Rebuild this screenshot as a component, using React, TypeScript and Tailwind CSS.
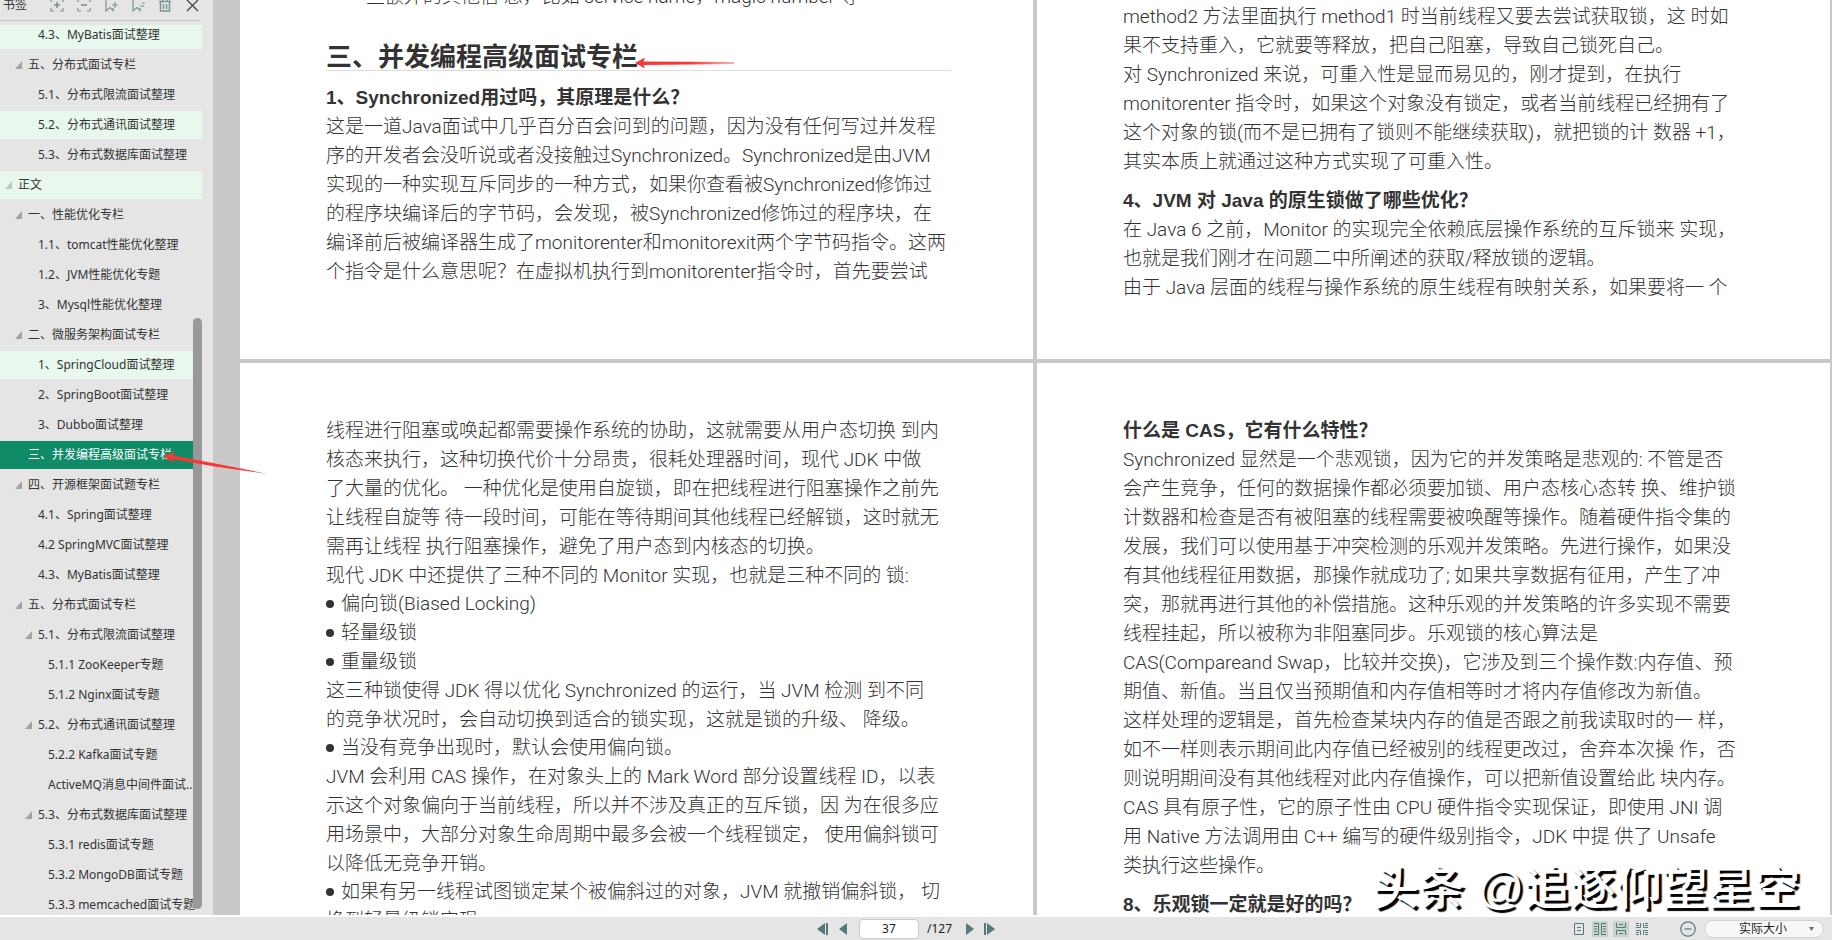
import type { ReactNode } from "react";

type Bookmark = {
  label: string;
  level: number;
  open?: boolean;
  marked?: boolean;
  active?: boolean;
};

const bookmarks: Bookmark[] = [
  { label: "4.3、MyBatis面试整理", level: 2, marked: true },
  { label: "五、分布式面试专栏", level: 1, open: true },
  { label: "5.1、分布式限流面试整理", level: 2 },
  { label: "5.2、分布式通讯面试整理", level: 2, marked: true },
  { label: "5.3、分布式数据库面试整理", level: 2 },
  { label: "正文", level: 0, open: true, marked: true },
  { label: "一、性能优化专栏", level: 1, open: true },
  { label: "1.1、tomcat性能优化整理", level: 2 },
  { label: "1.2、JVM性能优化专题", level: 2 },
  { label: "3、Mysql性能优化整理", level: 2 },
  { label: "二、微服务架构面试专栏", level: 1, open: true },
  { label: "1、SpringCloud面试整理", level: 2, marked: true },
  { label: "2、SpringBoot面试整理", level: 2 },
  { label: "3、Dubbo面试整理", level: 2 },
  { label: "三、并发编程高级面试专栏", level: 1, active: true },
  { label: "四、开源框架面试题专栏", level: 1, open: true },
  { label: "4.1、Spring面试整理", level: 2 },
  { label: "4.2 SpringMVC面试整理", level: 2 },
  { label: "4.3、MyBatis面试整理", level: 2 },
  { label: "五、分布式面试专栏", level: 1, open: true },
  { label: "5.1、分布式限流面试整理", level: 2, open: true },
  { label: "5.1.1 ZooKeeper专题", level: 3 },
  { label: "5.1.2 Nginx面试专题", level: 3 },
  { label: "5.2、分布式通讯面试整理", level: 2, open: true },
  { label: "5.2.2 Kafka面试专题", level: 3 },
  { label: "ActiveMQ消息中间件面试..", level: 3 },
  { label: "5.3、分布式数据库面试整理", level: 2, open: true },
  { label: "5.3.1 redis面试专题", level: 3 },
  { label: "5.3.2 MongoDB面试专题", level: 3 },
  { label: "5.3.3 memcached面试专题", level: 3 },
];

const indents = ["pl-[5px]", "pl-[15px]", "pl-[25px]", "pl-[35px]"];

function Lines({ rows }: { rows: string[] }) {
  return (
    <p>
      {rows.map((row) => (
        <span key={row} className="block">
          {row}
        </span>
      ))}
    </p>
  );
}

function Bullets({ items }: { items: string[] }) {
  return (
    <ul className="-mt-px">
      {items.map((item) => (
        <li key={item} className="flex items-center gap-[7px]">
          <span className="h-2 w-2 shrink-0 rounded-full bg-[#333]" />
          {item}
        </li>
      ))}
    </ul>
  );
}

function Question({ children }: { children: ReactNode }) {
  return (
    <h3 className="font-['Liberation_Sans','Noto_Sans_CJK_SC',sans-serif] font-bold">{children}</h3>
  );
}

function Sheet({ className, children }: { className: string; children: ReactNode }) {
  return (
    <section
      className={`flex min-w-0 flex-col overflow-hidden whitespace-nowrap bg-white pl-[86px] pr-[82px] ${className}`}
    >
      {children}
    </section>
  );
}

function ToolButton({ label, children }: { label: string; children: ReactNode }) {
  return (
    <button type="button" aria-label={label} className="flex h-4 w-4 items-center justify-center">
      <svg width="14" height="14" viewBox="0 0 14 14" fill="none" stroke="#7b9496" strokeWidth="1.2">
        {children}
      </svg>
    </button>
  );
}

function Sidebar() {
  return (
    <aside className="flex w-[213px] shrink-0 flex-col bg-[#e5e5e5] font-['Noto_Sans','Noto_Sans_CJK_SC',sans-serif] text-xs text-[#333]">
      <div className="flex h-[25px] shrink-0 flex-col pr-[13px]">
        <div className="flex h-[21px] items-start border-b border-[#c4c4c4] pl-[3px]">
          <span className="-mt-[3px] mr-[22px] shrink-0 leading-4">书签</span>
          <div className="-mt-[3px] flex shrink-0 gap-[11px]">
            <ToolButton label="展开">
              <path d="M1 4V1h3M10 1h3v3M13 10v3h-3M4 13H1v-3" />
              <path d="M7 4v6M4 7h6" strokeWidth="1.6" />
            </ToolButton>
            <ToolButton label="折叠">
              <path d="M1 4V1h3M10 1h3v3M13 10v3h-3M4 13H1v-3" />
              <path d="M4 7h6" strokeWidth="1.6" />
            </ToolButton>
            <ToolButton label="添加书签">
              <path d="M8 1H2v12l4-3.5 3 3V10M11 4v6M8 7h6" />
            </ToolButton>
            <ToolButton label="移除书签">
              <path d="M8 1H2v12l4-3.5 3 3V10M11 5h3M9 8h4" />
            </ToolButton>
            <ToolButton label="删除">
              <path d="M1 3.5h12M4.5 3V1h5v2M2.5 4v9h9V4M5.5 6v5M8.5 6v5" strokeWidth="1.5" />
            </ToolButton>
            <button type="button" aria-label="关闭" className="flex h-4 w-4 items-center justify-center">
              <svg width="13" height="13" viewBox="0 0 13 13" fill="none" stroke="#444" strokeWidth="1.3">
                <path d="M1 1l11 11M12 1L1 12" />
              </svg>
            </button>
          </div>
        </div>
      </div>

      <nav className="relative min-h-0 flex-1 overflow-hidden">
        <ul className="-mt-[5px] mr-[11px]">
          {bookmarks.map((item, i) => (
            <li key={i} className="py-px">
              <a
                href="#"
                className={`flex h-7 items-center overflow-hidden whitespace-nowrap ${indents[item.level]} ${
                  item.active ? "bg-[#0f8b68] text-white" : item.marked ? "bg-[#e8f8ec]" : ""
                }`}
              >
                <span className="flex w-[13px] shrink-0">
                  {item.open && (
                    <svg width="7" height="8" viewBox="0 0 7 8" fill={item.level === 0 ? "#c4c4c4" : "#a3a3a3"}>
                      <path d="M7 0v8H0z" />
                    </svg>
                  )}
                </span>
                {item.label}
              </a>
            </li>
          ))}
        </ul>
        <div className="absolute bottom-[6px] right-[11px] top-[293px] w-[9px] rounded-full bg-[#999]" />
      </nav>
    </aside>
  );
}

function StatusBar() {
  return (
    <footer className="grid h-[25px] shrink-0 grid-cols-[1fr_auto_1fr] items-center overflow-hidden border-t-2 border-white bg-[#e5e5e5] pr-5 font-['Noto_Sans','Noto_Sans_CJK_SC',sans-serif] text-xs text-[#222]">
      <div />
      <div className="flex items-center">
        <button type="button" aria-label="第一页" className="mr-[10px]">
          <svg width="12" height="12" viewBox="0 0 12 12" fill="#56787b">
            <path d="M8 0v12L0 6zM9 0h2v12H9z" />
          </svg>
        </button>
        <button type="button" aria-label="上一页" className="mr-3">
          <svg width="8" height="12" viewBox="0 0 8 12" fill="#56787b">
            <path d="M8 0v12L0 6z" />
          </svg>
        </button>
        <input
          aria-label="页码"
          defaultValue="37"
          className="mr-2 h-5 w-[60px] rounded-sm border border-[#ccc] bg-white text-center"
        />
        <span className="mr-[14px]">/127</span>
        <button type="button" aria-label="下一页" className="mr-[9px]">
          <svg width="8" height="12" viewBox="0 0 8 12" fill="#56787b">
            <path d="M0 0v12l8-6z" />
          </svg>
        </button>
        <button type="button" aria-label="最后一页">
          <svg width="12" height="12" viewBox="0 0 12 12" fill="#56787b">
            <path d="M4 0v12l8-6zM1 0h2v12H1z" />
          </svg>
        </button>
      </div>

      <div className="-mr-9 flex items-center justify-end">
        <div className="mr-[30px] flex gap-[5px]">
          <button type="button" aria-label="单页" className="flex h-4 w-4 items-center justify-center">
            <svg width="12" height="14" viewBox="0 0 12 14" fill="none" stroke="#56787b">
              <path d="M1.5 1.5h9v11h-9zM4 5.5h4M4 8.5h4" />
            </svg>
          </button>
          <button type="button" aria-label="双页" className="flex h-4 w-4 items-center justify-center bg-[#c5d5cb]">
            <svg width="14" height="14" viewBox="0 0 14 14" fill="none" stroke="#56787b">
              <path d="M1 1.5h4.5v11H1M13 1.5H8.5v11H13M1 4.5h3M1 7h3M1 9.5h3M10 4.5h3M10 7h3M10 9.5h3" />
            </svg>
          </button>
          <button type="button" aria-label="连续" className="flex h-4 w-4 items-center justify-center bg-[#c5d5cb]">
            <svg width="12" height="14" viewBox="0 0 12 14" fill="none" stroke="#56787b">
              <path d="M1.5 1v4.5h9V1M1.5 13V8.5h9V13M4 2.5h4M4 11.5h4" />
            </svg>
          </button>
          <button type="button" aria-label="连续双页" className="flex h-4 w-4 items-center justify-center">
            <svg width="12" height="14" viewBox="0 0 12 14" fill="none" stroke="#56787b">
              <path d="M4.5 1v4.5H0M7.5 1v4.5H12M4.5 13V8.5H0M7.5 13V8.5H12M0 1.5h3M0 3.5h3M9 1.5h3M9 3.5h3M0 10.5h3M0 12.5h3M9 10.5h3M9 12.5h3" />
            </svg>
          </button>
        </div>
        <button type="button" aria-label="缩小" className="mr-2">
          <svg width="16" height="16" viewBox="0 0 16 16" fill="none" stroke="#56787b" strokeWidth="1.2">
            <circle cx="8" cy="8" r="7.2" />
            <path d="M4.5 8h7" />
          </svg>
        </button>
        <div className="relative mr-2 flex items-center">
          <select
            aria-label="缩放"
            className="h-[18px] w-[120px] appearance-none rounded-full border border-[#d2d2d2] bg-[#f7f7f7] pl-[34px] leading-4"
          >
            <option>实际大小</option>
          </select>
          <svg className="pointer-events-none absolute right-[10px]" width="5" height="4" viewBox="0 0 5 4" fill="#56787b">
            <path d="M0 0h5L2.5 4z" />
          </svg>
        </div>
        <button type="button" aria-label="放大">
          <svg width="16" height="16" viewBox="0 0 16 16" fill="none" stroke="#56787b" strokeWidth="1.2">
            <circle cx="8" cy="8" r="7.2" />
            <path d="M4.5 8h7M8 4.5v7" />
          </svg>
        </button>
      </div>
    </footer>
  );
}

export default function App() {
  return (
    <div className="relative flex h-screen flex-col overflow-hidden bg-[#c9c9c9]">
      <div className="flex min-h-0 flex-1">
        <Sidebar />
        <main className="ml-[27px] grid min-w-0 flex-1 grid-cols-2 grid-rows-[359px_1fr] gap-1 pr-[2px] font-['Roboto','Noto_Sans_CJK_SC',sans-serif] text-[19px] font-light leading-[29px] text-[#333]">
          <Sheet className="justify-end pb-[73px]">
            <p className="pl-10">些额外的其他信 息，比如 service name，magic number 等</p>
            <h2 className="mb-3 mt-[18px] flex h-[42px] items-center border-b border-[#ddd] pt-[14px] text-[26px] font-bold leading-[30px]">
              三、并发编程高级面试专栏
              <svg width="100" height="12" viewBox="0 0 100 12" className="-ml-1 mt-3">
                <defs>
                  <linearGradient id="fade">
                    <stop offset="0.55" stopColor="#f93636" />
                    <stop offset="1" stopColor="#f93636" stopOpacity="0.4" />
                  </linearGradient>
                </defs>
                <path d="M1 6l10-5.5-1.5 4L100 5v2L9.5 8l1.5 3.5z" fill="url(#fade)" />
              </svg>
            </h2>
            <Question>1、Synchronized用过吗，其原理是什么？</Question>
            <Lines
              rows={[
                "这是一道Java面试中几乎百分百会问到的问题，因为没有任何写过并发程",
                "序的开发者会没听说或者没接触过Synchronized。Synchronized是由JVM",
                "实现的一种实现互斥同步的一种方式，如果你查看被Synchronized修饰过",
                "的程序块编译后的字节码，会发现，被Synchronized修饰过的程序块，在",
                "编译前后被编译器生成了monitorenter和monitorexit两个字节码指令。这两",
                "个指令是什么意思呢？在虚拟机执行到monitorenter指令时，首先要尝试",
              ]}
            />
          </Sheet>

          <Sheet className="justify-end gap-[10px] pb-[57px]">
            <Lines
              rows={[
                "method2 方法里面执行 method1 时当前线程又要去尝试获取锁，这 时如",
                "果不支持重入，它就要等释放，把自己阻塞，导致自己锁死自己。",
                "对 Synchronized 来说，可重入性是显而易见的，刚才提到，在执行",
                "monitorenter 指令时，如果这个对象没有锁定，或者当前线程已经拥有了",
                "这个对象的锁(而不是已拥有了锁则不能继续获取)，就把锁的计 数器 +1，",
                "其实本质上就通过这种方式实现了可重入性。",
              ]}
            />
            <div>
              <Question>4、JVM 对 Java 的原生锁做了哪些优化？</Question>
              <Lines
                rows={[
                  "在 Java 6 之前，Monitor 的实现完全依赖底层操作系统的互斥锁来 实现，",
                  "也就是我们刚才在问题二中所阐述的获取/释放锁的逻辑。",
                  "由于 Java 层面的线程与操作系统的原生线程有映射关系，如果要将一 个",
                ]}
              />
            </div>
          </Sheet>

          <Sheet className="pt-[53px]">
            <Lines
              rows={[
                "线程进行阻塞或唤起都需要操作系统的协助，这就需要从用户态切换 到内",
                "核态来执行，这种切换代价十分昂贵，很耗处理器时间，现代 JDK 中做",
                "了大量的优化。 一种优化是使用自旋锁，即在把线程进行阻塞操作之前先",
                "让线程自旋等 待一段时间，可能在等待期间其他线程已经解锁，这时就无",
                "需再让线程 执行阻塞操作，避免了用户态到内核态的切换。",
                "现代 JDK 中还提供了三种不同的 Monitor 实现，也就是三种不同的 锁:",
              ]}
            />
            <Bullets items={["偏向锁(Biased Locking)", "轻量级锁", "重量级锁"]} />
            <Lines
              rows={[
                "这三种锁使得 JDK 得以优化 Synchronized 的运行，当 JVM 检测 到不同",
                "的竞争状况时，会自动切换到适合的锁实现，这就是锁的升级、 降级。",
              ]}
            />
            <Bullets items={["当没有竞争出现时，默认会使用偏向锁。"]} />
            <Lines
              rows={[
                "JVM 会利用 CAS 操作，在对象头上的 Mark Word 部分设置线程 ID，以表",
                "示这个对象偏向于当前线程，所以并不涉及真正的互斥锁，因 为在很多应",
                "用场景中，大部分对象生命周期中最多会被一个线程锁定， 使用偏斜锁可",
                "以降低无竞争开销。",
              ]}
            />
            <Bullets items={["如果有另一线程试图锁定某个被偏斜过的对象，JVM 就撤销偏斜锁， 切"]} />
            <Lines rows={["换到轻量级锁实现。"]} />
          </Sheet>

          <Sheet className="gap-[10px] pt-[53px]">
            <div>
              <Question>什么是 CAS，它有什么特性？</Question>
              <Lines
                rows={[
                  "Synchronized 显然是一个悲观锁，因为它的并发策略是悲观的: 不管是否",
                  "会产生竞争，任何的数据操作都必须要加锁、用户态核心态转 换、维护锁",
                  "计数器和检查是否有被阻塞的线程需要被唤醒等操作。随着硬件指令集的",
                  "发展，我们可以使用基于冲突检测的乐观并发策略。先进行操作，如果没",
                  "有其他线程征用数据，那操作就成功了; 如果共享数据有征用，产生了冲",
                  "突，那就再进行其他的补偿措施。这种乐观的并发策略的许多实现不需要",
                  "线程挂起，所以被称为非阻塞同步。乐观锁的核心算法是",
                  "CAS(Compareand Swap，比较并交换)，它涉及到三个操作数:内存值、预",
                  "期值、新值。当且仅当预期值和内存值相等时才将内存值修改为新值。",
                  "这样处理的逻辑是，首先检查某块内存的值是否跟之前我读取时的一 样，",
                  "如不一样则表示期间此内存值已经被别的线程更改过，舍弃本次操 作，否",
                  "则说明期间没有其他线程对此内存值操作，可以把新值设置给此 块内存。",
                  "CAS 具有原子性，它的原子性由 CPU 硬件指令实现保证，即使用 JNI 调",
                  "用 Native 方法调用由 C++ 编写的硬件级别指令，JDK 中提 供了 Unsafe",
                  "类执行这些操作。",
                ]}
              />
            </div>
            <Question>8、乐观锁一定就是好的吗？</Question>
          </Sheet>
        </main>
      </div>
      <StatusBar />

      {/* Pointer at the current bookmark */}
      <svg className="pointer-events-none absolute left-[162px] top-[450px]" width="108" height="26" viewBox="0 0 108 26">
        <path d="M1 6l12-4-2 3.5L56 14l50 10-50-7L10 9l1.5 4z" fill="#f93636" />
      </svg>

      {/* Watermark */}
      <div className="pointer-events-none absolute bottom-6 right-8 whitespace-nowrap font-['Liberation_Sans','Noto_Sans_CJK_SC',sans-serif] text-[46px] font-medium leading-[56px] text-white [text-shadow:3px_3px_1px_#000]">
        头条 @追逐仰望星空
      </div>
    </div>
  );
}
